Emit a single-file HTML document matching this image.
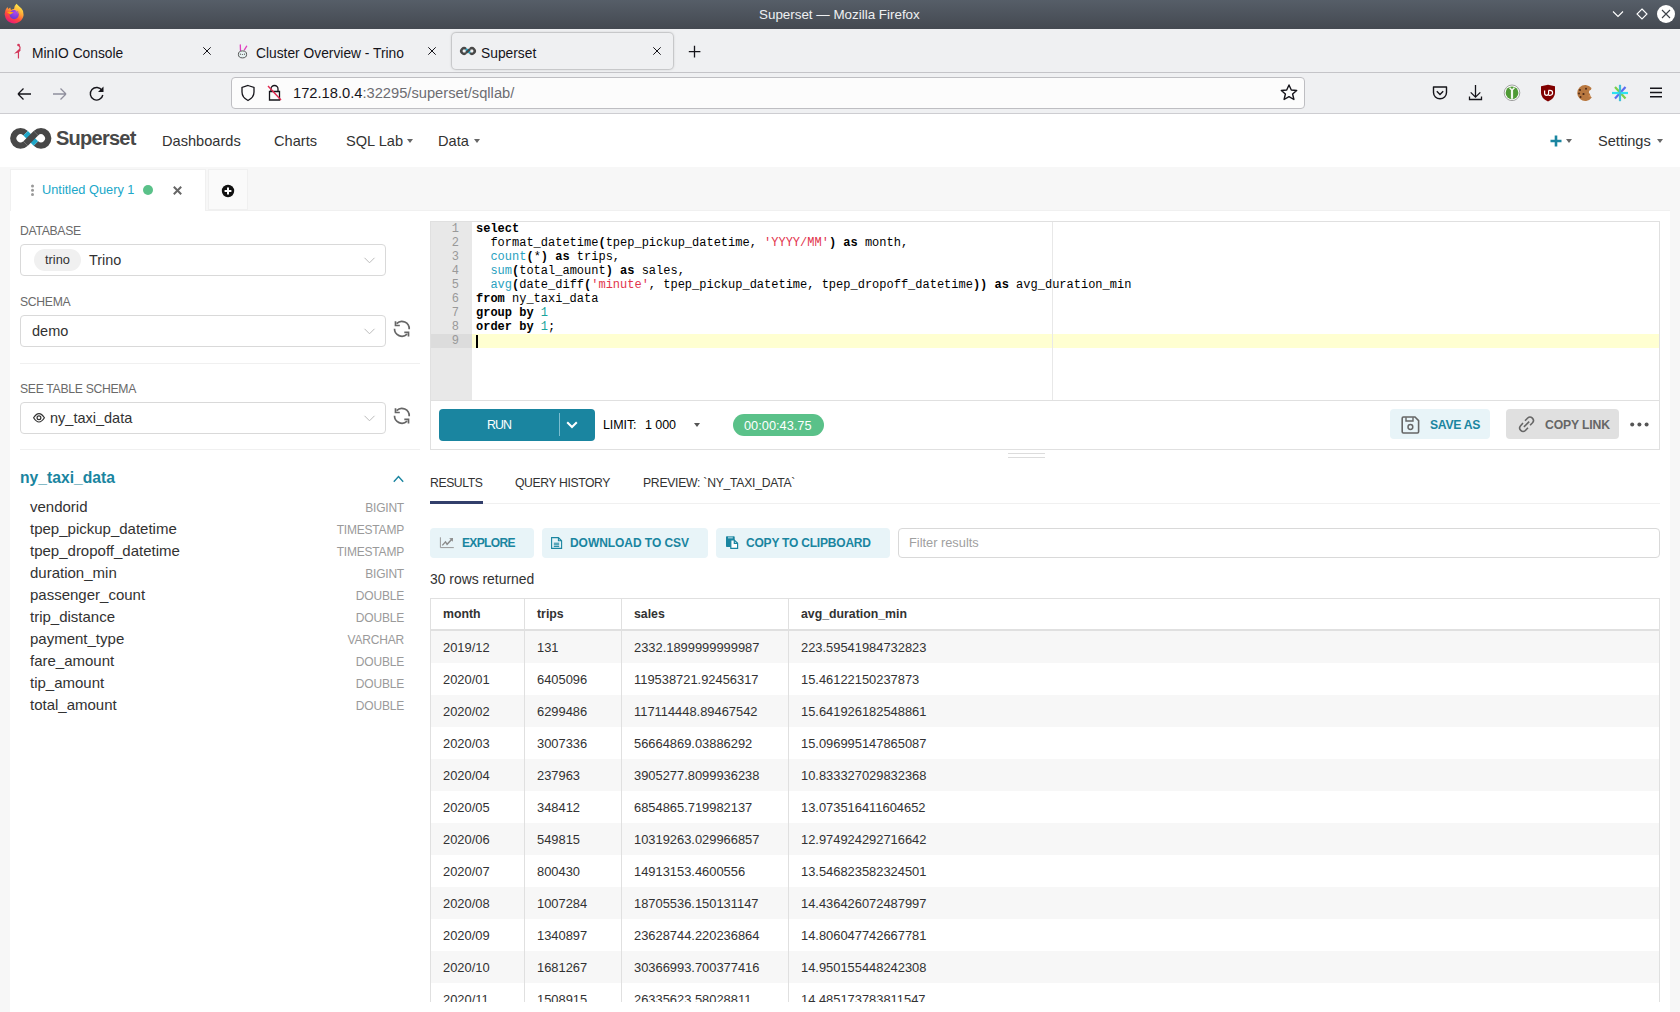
<!DOCTYPE html><html><head><meta charset="utf-8"><style>
*{box-sizing:border-box;margin:0;padding:0}
html,body{width:1680px;height:1012px;overflow:hidden;background:#f7f7f7;font-family:"Liberation Sans",sans-serif;position:relative}
.a{position:absolute}
.t{position:absolute;white-space:nowrap;line-height:1}
svg{position:absolute;overflow:visible}
.ff{font-size:13.8px;color:#15141a}
.nav{font-size:14.6px;color:#323232}
.caret{position:absolute;width:0;height:0;border-left:3px solid transparent;border-right:3px solid transparent;border-top:4px solid #666}
.lbl{font-size:12.2px;color:#6a6a6a;letter-spacing:-0.3px}
.sel{position:absolute;left:20px;width:366px;height:32px;border:1px solid #d9d9d9;border-radius:4px;background:#fff}
.col{font-size:15px;color:#323232}
.typ{font-size:12px;color:#9a9a9a;text-align:right;letter-spacing:-0.2px}
.code{font-family:"Liberation Mono",monospace;font-size:12px;line-height:14px;color:#000;white-space:pre}
.gut{font-family:"Liberation Mono",monospace;font-size:12px;line-height:14px;color:#999;text-align:right;width:29px;white-space:pre}
.kw{font-weight:bold}
.fn{color:#2aa1c0}
.st{color:#e2344c}
.nm{color:#1aa39b}
.btn2{position:absolute;height:30px;background:#e8f4f8;border-radius:4px}
.btxt{font-size:11.8px;font-weight:bold;color:#1a85a0}
.cell{font-size:12.9px;color:#323232}
.hcell{font-size:12.3px;font-weight:bold;color:#323232}
</style></head><body>
<div class="a" style="left:0;top:0;width:1680px;height:29px;background:linear-gradient(#565e68,#444951)"></div>
<svg style="left:0;top:0" width="30" height="28" viewBox="0 0 30 28">
<defs>
<linearGradient id="fxr" x1="0.8" y1="0.1" x2="0.3" y2="1"><stop offset="0" stop-color="#ffe94a"/><stop offset="0.35" stop-color="#ffa436"/><stop offset="0.65" stop-color="#ff4a3d"/><stop offset="1" stop-color="#e8157d"/></linearGradient>
<radialGradient id="fxp" cx="0.6" cy="0.3" r="0.8"><stop offset="0" stop-color="#b043f0"/><stop offset="1" stop-color="#5a3ad0"/></radialGradient>
</defs>
<path d="M16.5 3.8 Q19 6.5 21.5 8.5 Q24 11 23.6 15 A9.5 9.5 0 1 1 5.5 10 Q6.5 8 7.5 7 L8.2 9 L10.2 7.6 L11 10 Q13 8.8 14 9 Q14 6 16.5 3.8 Z" fill="url(#fxr)"/>
<circle cx="14.2" cy="14.6" r="4.6" fill="url(#fxp)"/>
<path d="M7 12.5 Q10 11 13.8 12.6 Q11.5 13.8 10.5 14.5 Q8.5 13 7 12.5 Z" fill="#ffa80e"/>
<path d="M14 9 Q17 8.5 17 11 L15.6 11.6 Q18 12.5 17.5 16 Q18.5 11 15.5 10.5 Z" fill="#ffd23a" opacity="0.6"/>
</svg>
<div class="t" style="left:759px;top:8px;font-size:13.4px;color:#eef0f2">Superset — Mozilla Firefox</div>
<svg style="left:1610px;top:6px" width="70" height="20" viewBox="0 0 70 20">
<polyline points="3,5.5 8,10.5 13,5.5" fill="none" stroke="#fff" stroke-width="1.1"/>
<polygon points="32,3 37,8 32,13 27,8" fill="none" stroke="#fff" stroke-width="1.1"/>
<circle cx="56" cy="8" r="9" fill="#fff"/>
<path d="M52 4 L60 12 M60 4 L52 12" stroke="#3d4249" stroke-width="1.1"/>
</svg>
<div class="a" style="left:0;top:29px;width:1680px;height:43px;background:#eff0f2"></div>
<div class="a" style="left:0;top:72px;width:1680px;height:1px;background:#c4c4c8"></div>
<div class="a" style="left:0;top:73px;width:1680px;height:40px;background:#eff0f2"></div>
<div class="a" style="left:0;top:113px;width:1680px;height:1px;background:#cdcdd1"></div>
<div class="a" style="left:452px;top:33px;width:221px;height:36px;background:#eff0f2;border-radius:4px;box-shadow:0 0 0 1px rgba(0,0,0,.07),0 0 3px rgba(0,0,0,.28)"></div>
<svg style="left:8px;top:40px" width="20" height="22" viewBox="0 0 20 22">
<circle cx="10.5" cy="5" r="1.3" fill="#d3385a"/>
<path d="M10.8 5.3 Q12.8 7.2 11.9 9.6" fill="none" stroke="#d3385a" stroke-width="1.2"/>
<path d="M6 13.8 L11.6 8.6 L12.6 10.4 L10.6 12.6 Z" fill="#d3385a"/>
<path d="M10.45 11.4 V17.9" stroke="#d3385a" stroke-width="1.2" stroke-linecap="round"/>
</svg>
<svg style="left:236px;top:42px" width="14" height="17" viewBox="0 0 14 17">
<path d="M4.3 3 L4.5 8.6 M10.7 4.2 L8.4 7.8" stroke="#e040c0" stroke-width="1.3" stroke-linecap="round"/>
<ellipse cx="6.5" cy="12.4" rx="4.1" ry="3.5" fill="#e6f2f2" stroke="#555" stroke-width="1"/>
<circle cx="4.4" cy="12.2" r="0.6" fill="#555"/><circle cx="6.4" cy="12.5" r="0.6" fill="#555"/><circle cx="8.5" cy="12.2" r="0.6" fill="#555"/>
</svg>
<svg style="left:460px;top:47px" width="16" height="8" viewBox="0 0.9 41.5 20.8" preserveAspectRatio="none">
<path d="M15.6 6.2 A7.2 7.2 0 1 0 15.6 16.4 M25.9 6.2 A7.2 7.2 0 1 1 25.9 16.4" fill="none" stroke="#484848" stroke-width="6.4"/>
<path d="M15.6 6.2 L25.9 16.4" stroke="#20a7c9" stroke-width="6.4"/>
<path d="M15.6 16.4 L25.9 6.2" stroke="#484848" stroke-width="6.4"/>
</svg>
<div class="t ff" style="left:32px;top:47px">MinIO Console</div>
<div class="t ff" style="left:256px;top:47px">Cluster Overview - Trino</div>
<div class="t ff" style="left:481px;top:47px">Superset</div>
<svg style="left:203px;top:47px" width="8" height="8" viewBox="0 0 8 8"><path d="M0.3 0.3 L7.7 7.7 M7.7 0.3 L0.3 7.7" stroke="#15141a" stroke-width="1"/></svg>
<svg style="left:428px;top:47px" width="8" height="8" viewBox="0 0 8 8"><path d="M0.3 0.3 L7.7 7.7 M7.7 0.3 L0.3 7.7" stroke="#15141a" stroke-width="1"/></svg>
<svg style="left:653px;top:47px" width="8" height="8" viewBox="0 0 8 8"><path d="M0.3 0.3 L7.7 7.7 M7.7 0.3 L0.3 7.7" stroke="#15141a" stroke-width="1"/></svg>
<svg style="left:688px;top:45px" width="13" height="13" viewBox="0 0 13 13"><path d="M6.5 0.8 V12.6 M0.8 6.7 H12.4" stroke="#15141a" stroke-width="1.3"/></svg>
<svg style="left:16px;top:86px" width="90" height="16" viewBox="0 0 90 16">
<path d="M2 8 H15 M2 8 L7.5 2.5 M2 8 L7.5 13.5" fill="none" stroke="#15141a" stroke-width="1.3"/>
<path d="M37 8 H50 M50 8 L44.5 2.5 M50 8 L44.5 13.5" fill="none" stroke="#8f8f9d" stroke-width="1.3"/>
<path d="M86 4.5 A6.3 6.3 0 1 0 86.8 9" fill="none" stroke="#15141a" stroke-width="1.4"/>
<path d="M87.5 0.5 L87.5 6 L82 6 Z" fill="#15141a"/>
</svg>
<div class="a" style="left:231px;top:77px;width:1074px;height:32px;background:#fcfcfc;border:1px solid #bebec2;border-radius:4px"></div>
<svg style="left:240px;top:84px" width="40" height="18" viewBox="0 0 40 18">
<path d="M8 1.5 L14 3.5 V8 Q14 13.5 8 16.5 Q2 13.5 2 8 V3.5 Z" fill="none" stroke="#15141a" stroke-width="1.3"/>
<path d="M31 7 V5 A3.5 3.5 0 0 1 38 5 V7 M29.5 7.5 H39.5 V16 H29.5 Z" fill="none" stroke="#15141a" stroke-width="1.3"/>
<path d="M28 2 L41 16" stroke="#e22850" stroke-width="1.4"/>
</svg>
<div class="t" style="left:293px;top:86px;font-size:14.7px;color:#15141a">172.18.0.4<span style="color:#6d6d72">:32295/superset/sqllab/</span></div>
<svg style="left:1280px;top:84px" width="18" height="17" viewBox="0 0 18 17">
<path d="M9 1 L11.3 6 L16.7 6.5 L12.6 10 L13.9 15.5 L9 12.6 L4.1 15.5 L5.4 10 L1.3 6.5 L6.7 6 Z" fill="none" stroke="#15141a" stroke-width="1.4" stroke-linejoin="round"/>
</svg>
<svg style="left:1430px;top:84px" width="240" height="20" viewBox="0 0 240 20">
<path d="M3.5 3 H16.5 V8.5 A6.5 6.2 0 0 1 3.5 8.5 Z" fill="none" stroke="#15141a" stroke-width="1.4" stroke-linejoin="round"/>
<path d="M6.8 7.3 L10 10.5 L13.2 7.3" fill="none" stroke="#15141a" stroke-width="1.4"/>
<path d="M45.5 1 V13 M40.7 8.4 L45.5 13.2 L50.3 8.4 M39.5 12.5 V15.5 H51.5 V12.5" fill="none" stroke="#15141a" stroke-width="1.3"/>
<circle cx="82" cy="8.8" r="7.8" fill="#fff" stroke="#8a8a8a" stroke-width="0.8"/>
<circle cx="82" cy="8.8" r="6.4" fill="#4f9a35"/>
<path d="M82 5 V14.8" stroke="#f2f8ee" stroke-width="2.2"/>
<path d="M79.6 3.6 Q82 7.5 84.4 3.6" fill="none" stroke="#f2f8ee" stroke-width="1.6"/>
<path d="M111 2.2 L118 0.8 L125 2.2 V9 Q125 14.2 118 17.4 Q111 14.2 111 9 Z" fill="#800000"/>
<path d="M114.6 6.4 V9.3 Q114.6 11.3 116.6 11.3 Q118.6 11.3 118.6 9.3 V6.4" fill="none" stroke="#fff" stroke-width="1.2"/>
<path d="M118.4 6.4 H120 Q122.6 6.4 122.6 8.85 Q122.6 11.3 120 11.3 H118.4" fill="none" stroke="#fff" stroke-width="1.2"/>
<path d="M161.5 4 A8 8 0 1 0 161.8 13.5 Q159.5 12.5 160 10 Q158 8.5 159.5 6.5 Q161.5 6 161.5 4 Z" fill="#b87840"/>
<circle cx="150" cy="6" r="1" fill="#4a2818"/><circle cx="153.5" cy="10" r="1.1" fill="#4a2818"/><circle cx="150.5" cy="13" r="1" fill="#4a2818"/><circle cx="156" cy="4.8" r="1" fill="#4a2818"/><circle cx="149" cy="9.5" r="0.9" fill="#4a2818"/>
<circle cx="159.5" cy="12" r="1" fill="#d08850"/>
<path d="M185 3 L195.5 14.5" stroke="#7ad04a" stroke-width="2.2"/>
<path d="M195.5 3 L185 14.5" stroke="#5b6cf0" stroke-width="2.2"/>
<path d="M182 9 H198" stroke="#2ee0f0" stroke-width="2.2"/>
<path d="M190 0.8 V17.2" stroke="#40c0d8" stroke-width="2.2"/>
<path d="M220 4.2 H232 M220 8.5 H232 M220 12.8 H232" stroke="#15141a" stroke-width="1.4"/>
</svg>
<div class="a" style="left:0;top:114px;width:1680px;height:53px;background:#fff"></div>
<svg style="left:10px;top:127px" width="42" height="23" viewBox="0 0 42 23">
<path d="M15.6 6.2 A7.2 7.2 0 1 0 15.6 16.4 M25.9 6.2 A7.2 7.2 0 1 1 25.9 16.4" fill="none" stroke="#484848" stroke-width="6.4"/>
<path d="M15.6 6.2 L25.9 16.4" stroke="#20a7c9" stroke-width="6.4"/>
<path d="M15.6 16.4 L25.9 6.2" stroke="#484848" stroke-width="6.4"/>
</svg>
<div class="t" style="left:56px;top:128px;font-size:20px;font-weight:bold;color:#484848;letter-spacing:-0.75px">Superset</div>
<div class="t nav" style="left:162px;top:134px">Dashboards</div>
<div class="t nav" style="left:274px;top:134px">Charts</div>
<div class="t nav" style="left:346px;top:134px">SQL Lab</div>
<div class="caret" style="left:407px;top:139px"></div>
<div class="t nav" style="left:438px;top:134px">Data</div>
<div class="caret" style="left:474px;top:139px"></div>
<svg style="left:1550px;top:135px" width="12" height="12" viewBox="0 0 12 12"><path d="M6 0.5 V11.5 M0.5 6 H11.5" stroke="#1a85a0" stroke-width="2.6"/></svg>
<div class="caret" style="left:1566px;top:139px"></div>
<div class="t nav" style="left:1598px;top:134px">Settings</div>
<div class="caret" style="left:1657px;top:139px"></div>
<div class="a" style="left:0;top:167px;width:1680px;height:43px;background:#f7f7f7"></div>
<div class="a" style="left:10px;top:169px;width:196px;height:42px;background:#fff;border:1px solid #f0f0f0;border-bottom:none"></div>
<div class="a" style="left:208px;top:169px;width:40px;height:41px;background:#fafafa;border:1px solid #f0f0f0"></div>
<svg style="left:30px;top:184px" width="6" height="13" viewBox="0 0 6 13"><circle cx="2.5" cy="2" r="1.5" fill="#999"/><circle cx="2.5" cy="6.3" r="1.5" fill="#999"/><circle cx="2.5" cy="10.6" r="1.5" fill="#999"/></svg>
<div class="t" style="left:42px;top:184px;font-size:12.8px;color:#20a7c9">Untitled Query 1</div>
<div class="a" style="left:143px;top:185px;width:10px;height:10px;border-radius:50%;background:#5ac189"></div>
<svg style="left:173px;top:186px" width="9" height="9" viewBox="0 0 9 9"><path d="M0.8 0.8 L8.2 8.2 M8.2 0.8 L0.8 8.2" stroke="#666" stroke-width="2"/></svg>
<svg style="left:221px;top:184px" width="14" height="14" viewBox="0 0 14 14"><circle cx="7" cy="7" r="6.2" fill="#111"/><path d="M7 3.6 V10.4 M3.6 7 H10.4" stroke="#fff" stroke-width="2"/></svg>
<div class="a" style="left:10px;top:210px;width:1660px;height:802px;background:#fff;border-top:1px solid #f0f0f0"></div>
<div class="a" style="left:11px;top:210px;width:194px;height:1px;background:#fff"></div>
<div class="t lbl" style="left:20px;top:225px">DATABASE</div>
<div class="sel" style="top:244px"></div>
<div class="a" style="left:34px;top:249px;width:47px;height:22px;border-radius:11px;background:#f0f0f0"></div>
<div class="t" style="left:45px;top:254px;font-size:12.8px;color:#323232">trino</div>
<div class="t" style="left:89px;top:253px;font-size:14.4px;color:#323232">Trino</div>
<div class="t lbl" style="left:20px;top:296px">SCHEMA</div>
<div class="sel" style="top:315px"></div>
<div class="t" style="left:32px;top:324px;font-size:14.5px;color:#323232">demo</div>
<div class="a" style="left:20px;top:363px;width:400px;height:1px;background:#f0f0f0"></div>
<div class="t lbl" style="left:20px;top:383px">SEE TABLE SCHEMA</div>
<div class="sel" style="top:402px"></div>
<svg style="left:28px;top:406px" width="30" height="24" viewBox="0 0 30 24"><path d="M5.6 11.8 Q11 3.4 16.4 11.8 Q11 20.2 5.6 11.8 Z" fill="none" stroke="#323232" stroke-width="1.2"/><circle cx="10.95" cy="11.8" r="1.9" fill="none" stroke="#323232" stroke-width="1.2"/></svg>
<div class="t" style="left:50px;top:411px;font-size:14.5px;color:#323232">ny_taxi_data</div>
<div class="a" style="left:20px;top:449px;width:400px;height:1px;background:#f0f0f0"></div>
<svg style="left:364px;top:257px" width="11" height="7" viewBox="0 0 11 7"><polyline points="0.5,0.8 5.5,5.8 10.5,0.8" fill="none" stroke="#bbb" stroke-width="1"/></svg>
<svg style="left:364px;top:328px" width="11" height="7" viewBox="0 0 11 7"><polyline points="0.5,0.8 5.5,5.8 10.5,0.8" fill="none" stroke="#bbb" stroke-width="1"/></svg>
<svg style="left:364px;top:415px" width="11" height="7" viewBox="0 0 11 7"><polyline points="0.5,0.8 5.5,5.8 10.5,0.8" fill="none" stroke="#bbb" stroke-width="1"/></svg>
<svg style="left:394px;top:321px" width="16" height="16" viewBox="0 0 16 16">
<path d="M2.6 2.6 A7.4 7.4 0 0 1 15.2 8.2 M0.5 7.8 A7.4 7.4 0 0 0 13.1 13.1" fill="none" stroke="#666" stroke-width="1.7"/>
<path d="M1.5 0.3 V4.5 H5.8 M10.3 11.4 H14.5 V15.6" fill="none" stroke="#666" stroke-width="1.7"/>
</svg>
<svg style="left:394px;top:408px" width="16" height="16" viewBox="0 0 16 16">
<path d="M2.6 2.6 A7.4 7.4 0 0 1 15.2 8.2 M0.5 7.8 A7.4 7.4 0 0 0 13.1 13.1" fill="none" stroke="#666" stroke-width="1.7"/>
<path d="M1.5 0.3 V4.5 H5.8 M10.3 11.4 H14.5 V15.6" fill="none" stroke="#666" stroke-width="1.7"/>
</svg>
<div class="t" style="left:20px;top:470px;font-size:15.7px;font-weight:bold;color:#1a85a0">ny_taxi_data</div>
<svg style="left:393px;top:475px" width="11" height="8" viewBox="0 0 11 8"><polyline points="0.8,6.8 5.5,1.5 10.2,6.8" fill="none" stroke="#1a85a0" stroke-width="1.4"/></svg>
<div class="t col" style="left:30px;top:499px">vendorid</div>
<div class="t typ" style="left:283px;width:121px;top:502px">BIGINT</div>
<div class="t col" style="left:30px;top:521px">tpep_pickup_datetime</div>
<div class="t typ" style="left:283px;width:121px;top:524px">TIMESTAMP</div>
<div class="t col" style="left:30px;top:543px">tpep_dropoff_datetime</div>
<div class="t typ" style="left:283px;width:121px;top:546px">TIMESTAMP</div>
<div class="t col" style="left:30px;top:565px">duration_min</div>
<div class="t typ" style="left:283px;width:121px;top:568px">BIGINT</div>
<div class="t col" style="left:30px;top:587px">passenger_count</div>
<div class="t typ" style="left:283px;width:121px;top:590px">DOUBLE</div>
<div class="t col" style="left:30px;top:609px">trip_distance</div>
<div class="t typ" style="left:283px;width:121px;top:612px">DOUBLE</div>
<div class="t col" style="left:30px;top:631px">payment_type</div>
<div class="t typ" style="left:283px;width:121px;top:634px">VARCHAR</div>
<div class="t col" style="left:30px;top:653px">fare_amount</div>
<div class="t typ" style="left:283px;width:121px;top:656px">DOUBLE</div>
<div class="t col" style="left:30px;top:675px">tip_amount</div>
<div class="t typ" style="left:283px;width:121px;top:678px">DOUBLE</div>
<div class="t col" style="left:30px;top:697px">total_amount</div>
<div class="t typ" style="left:283px;width:121px;top:700px">DOUBLE</div>
<div class="a" style="left:430px;top:221px;width:1230px;height:180px;border:1px solid #e0e0e0;background:#fff"></div>
<div class="a" style="left:431px;top:222px;width:41px;height:178px;background:#e8e8e8"></div>
<div class="a" style="left:472px;top:334px;width:1187px;height:14px;background:#ffffcc;opacity:0.9"></div>
<div class="a" style="left:431px;top:334px;width:41px;height:14px;background:#dcdcdc"></div>
<div class="a" style="left:476px;top:335px;width:2px;height:13px;background:#000"></div>
<div class="a" style="left:1052px;top:222px;width:1px;height:178px;background:#e8e8e8"></div>
<div class="t gut" style="left:430px;top:222px">1
2
3
4
5
6
7
8
9
</div>
<div class="t code" style="left:476px;top:222px"><span class="kw">select</span>
  format_datetime<span class="kw">(</span>tpep_pickup_datetime, <span class="st">'YYYY/MM'</span><span class="kw">)</span> <span class="kw">as</span> month,
  <span class="fn">count</span><span class="kw">(</span>*<span class="kw">)</span> <span class="kw">as</span> trips,
  <span class="fn">sum</span><span class="kw">(</span>total_amount<span class="kw">)</span> <span class="kw">as</span> sales,
  <span class="fn">avg</span><span class="kw">(</span>date_diff<span class="kw">(</span><span class="st">'minute'</span>, tpep_pickup_datetime, tpep_dropoff_datetime<span class="kw">))</span> <span class="kw">as</span> avg_duration_min
<span class="kw">from</span> ny_taxi_data
<span class="kw">group</span> <span class="kw">by</span> <span class="nm">1</span>
<span class="kw">order</span> <span class="kw">by</span> <span class="nm">1</span>;
</div>
<div class="a" style="left:430px;top:401px;width:1230px;height:49px;border:1px solid #e0e0e0;border-top:none;background:#fff"></div>
<div class="a" style="left:439px;top:409px;width:156px;height:32px;border-radius:4px;background:#1a85a0"></div>
<div class="a" style="left:559px;top:413px;width:1px;height:23px;background:#7bbdd0"></div>
<div class="t" style="left:487px;top:419px;font-size:12.40px;letter-spacing:-0.933px;color:#fff">RUN</div>
<svg style="left:566px;top:421px" width="12" height="8" viewBox="0 0 12 8"><polyline points="1.2,1.2 6,6 10.8,1.2" fill="none" stroke="#fff" stroke-width="2"/></svg>
<div class="t" style="left:603px;top:419px;font-size:12.50px;letter-spacing:-0.107px;color:#000">LIMIT:</div>
<div class="t" style="left:645px;top:419px;font-size:12.50px;letter-spacing:-0.070px;color:#000">1 000</div>
<div class="caret" style="left:694px;top:423px;border-top-color:#555"></div>
<div class="a" style="left:733px;top:414px;width:91px;height:22px;border-radius:11px;background:#5ac189"></div>
<div class="t" style="left:744px;top:420px;font-size:12.8px;color:#fff">00:00:43.75</div>
<div class="a" style="left:1390px;top:409px;width:100px;height:30px;border-radius:4px;background:#e8f4f8"></div>
<svg style="left:1401px;top:416px" width="19" height="18" viewBox="0 0 19 18">
<path d="M1.2 2.2 Q1.2 1 2.4 1 H14 L17.6 4.6 V15.8 Q17.6 17 16.4 17 H2.4 Q1.2 17 1.2 15.8 Z" fill="none" stroke="#666" stroke-width="1.6"/>
<path d="M5 1.2 V5 H12 V1.2" fill="none" stroke="#666" stroke-width="1.4"/>
<circle cx="9.4" cy="11" r="2.4" fill="none" stroke="#666" stroke-width="1.5"/>
</svg>
<div class="t btxt" style="left:1430px;top:419px;font-size:12.20px;letter-spacing:-0.284px">SAVE AS</div>
<div class="a" style="left:1506px;top:409px;width:113px;height:30px;border-radius:4px;background:#e0e0e0"></div>
<svg style="left:1512px;top:410px" width="30" height="30" viewBox="0 0 30 30">
<path d="M13 10.7 L15.7 8.0 A3.4 3.4 0 0 1 20.5 12.8 L18.1 15.2 M11 13 L8.6 15.7 A3.4 3.4 0 0 0 13.4 20.5 L16 17.8 M11.9 16.9 L17.2 11.6" fill="none" stroke="#666" stroke-width="1.6"/>
</svg>
<div class="t btxt" style="left:1545px;top:419px;font-size:12.20px;letter-spacing:-0.151px;color:#666">COPY LINK</div>
<svg style="left:1630px;top:422px" width="19" height="5" viewBox="0 0 19 5"><circle cx="2.2" cy="2.5" r="2" fill="#555"/><circle cx="9.4" cy="2.5" r="2" fill="#555"/><circle cx="16.6" cy="2.5" r="2" fill="#555"/></svg>
<div class="a" style="left:1008px;top:453px;width:37px;height:1px;background:#dcdcdc"></div>
<div class="a" style="left:1008px;top:457px;width:37px;height:1px;background:#dcdcdc"></div>
<div class="a" style="left:430px;top:503px;width:1230px;height:1px;background:#f0f0f0"></div>
<div class="t" style="left:430px;top:477px;font-size:12.20px;letter-spacing:-0.395px;color:#323232">RESULTS</div>
<div class="t" style="left:515px;top:477px;font-size:12.20px;letter-spacing:-0.385px;color:#323232">QUERY HISTORY</div>
<div class="t" style="left:643px;top:477px;font-size:12.20px;letter-spacing:-0.269px;color:#323232">PREVIEW: `NY_TAXI_DATA`</div>
<div class="a" style="left:430px;top:501px;width:53px;height:3px;background:#323f6b"></div>
<div class="btn2" style="left:430px;top:528px;width:104px"></div>
<svg style="left:436px;top:532px" width="22" height="20" viewBox="0 0 22 20"><path d="M4.4 5.3 V15.6 H17.8" fill="none" stroke="#999" stroke-width="1"/><path d="M6.3 13.4 L9.5 9.9 L11.1 12.3 L15.8 7.3" fill="none" stroke="#8a8a8a" stroke-width="1.4"/><path d="M13.2 6.2 L17 6 L16.8 9.8 Z" fill="#8a8a8a"/></svg>
<div class="t btxt" style="left:462px;top:537px;font-size:12.00px;letter-spacing:-0.641px">EXPLORE</div>
<div class="btn2" style="left:542px;top:528px;width:166px"></div>
<svg style="left:551px;top:537px" width="12" height="12" viewBox="0 0 12 12"><path d="M0.6 0.6 H7.4 L10.6 3.8 V11.4 H0.6 Z M7.4 0.6 V3.8 H10.6" fill="none" stroke="#1a85a0" stroke-width="1.1"/><path d="M2.8 6.2 H8.2 M2.8 7.8 H8.2 M2.8 9.4 H8.2" stroke="#1a85a0" stroke-width="1"/></svg>
<div class="t btxt" style="left:570px;top:537px;font-size:12.00px;letter-spacing:-0.056px">DOWNLOAD TO CSV</div>
<div class="btn2" style="left:716px;top:528px;width:174px"></div>
<svg style="left:720px;top:530px" width="20" height="26" viewBox="0 0 20 26"><rect x="6" y="6.2" width="8.7" height="10.8" rx="0.8" fill="#1a85a0"/><rect x="8" y="6.6" width="4.8" height="1.9" fill="#8cc3d3"/><path d="M10.8 10 H14.3 L17.6 13.3 V18.4 H10.8 Z" fill="#fff" stroke="#1a85a0" stroke-width="1.2"/><path d="M14.3 10 V13.3 H17.6" fill="none" stroke="#1a85a0" stroke-width="1.2"/></svg>
<div class="t btxt" style="left:746px;top:537px;font-size:12.00px;letter-spacing:-0.203px">COPY TO CLIPBOARD</div>
<div class="a" style="left:898px;top:528px;width:762px;height:30px;border:1px solid #d9d9d9;border-radius:4px;background:#fff"></div>
<div class="t" style="left:909px;top:537px;font-size:12.8px;color:#a0a0a0">Filter results</div>
<div class="t" style="left:430px;top:573px;font-size:13.9px;color:#323232">30 rows returned</div>
<div class="a" style="left:430px;top:598px;width:1230px;height:404px;overflow:hidden;border-left:1px solid #e0e0e0;border-right:1px solid #e0e0e0;border-top:1px solid #e0e0e0">
<div class="a" style="left:0;top:30px;width:1230px;height:2px;background:#e0e0e0"></div>
<div class="a" style="left:0;top:32px;width:1230px;height:32px;background:#f7f7f7"></div>
<div class="a" style="left:0;top:96px;width:1230px;height:32px;background:#f7f7f7"></div>
<div class="a" style="left:0;top:160px;width:1230px;height:32px;background:#f7f7f7"></div>
<div class="a" style="left:0;top:224px;width:1230px;height:32px;background:#f7f7f7"></div>
<div class="a" style="left:0;top:288px;width:1230px;height:32px;background:#f7f7f7"></div>
<div class="a" style="left:0;top:352px;width:1230px;height:32px;background:#f7f7f7"></div>
<div class="a" style="left:93px;top:0;width:1px;height:404px;background:#e0e0e0"></div>
<div class="a" style="left:190px;top:0;width:1px;height:404px;background:#e0e0e0"></div>
<div class="a" style="left:357px;top:0;width:1px;height:404px;background:#e0e0e0"></div>
<div class="t hcell" style="left:12px;top:9px">month</div>
<div class="t hcell" style="left:106px;top:9px">trips</div>
<div class="t hcell" style="left:203px;top:9px">sales</div>
<div class="t hcell" style="left:370px;top:9px">avg_duration_min</div>
<div class="t cell" style="left:12px;top:43px">2019/12</div>
<div class="t cell" style="left:106px;top:43px">131</div>
<div class="t cell" style="left:203px;top:43px">2332.1899999999987</div>
<div class="t cell" style="left:370px;top:43px">223.59541984732823</div>
<div class="t cell" style="left:12px;top:75px">2020/01</div>
<div class="t cell" style="left:106px;top:75px">6405096</div>
<div class="t cell" style="left:203px;top:75px">119538721.92456317</div>
<div class="t cell" style="left:370px;top:75px">15.46122150237873</div>
<div class="t cell" style="left:12px;top:107px">2020/02</div>
<div class="t cell" style="left:106px;top:107px">6299486</div>
<div class="t cell" style="left:203px;top:107px">117114448.89467542</div>
<div class="t cell" style="left:370px;top:107px">15.641926182548861</div>
<div class="t cell" style="left:12px;top:139px">2020/03</div>
<div class="t cell" style="left:106px;top:139px">3007336</div>
<div class="t cell" style="left:203px;top:139px">56664869.03886292</div>
<div class="t cell" style="left:370px;top:139px">15.096995147865087</div>
<div class="t cell" style="left:12px;top:171px">2020/04</div>
<div class="t cell" style="left:106px;top:171px">237963</div>
<div class="t cell" style="left:203px;top:171px">3905277.8099936238</div>
<div class="t cell" style="left:370px;top:171px">10.833327029832368</div>
<div class="t cell" style="left:12px;top:203px">2020/05</div>
<div class="t cell" style="left:106px;top:203px">348412</div>
<div class="t cell" style="left:203px;top:203px">6854865.719982137</div>
<div class="t cell" style="left:370px;top:203px">13.073516411604652</div>
<div class="t cell" style="left:12px;top:235px">2020/06</div>
<div class="t cell" style="left:106px;top:235px">549815</div>
<div class="t cell" style="left:203px;top:235px">10319263.029966857</div>
<div class="t cell" style="left:370px;top:235px">12.974924292716642</div>
<div class="t cell" style="left:12px;top:267px">2020/07</div>
<div class="t cell" style="left:106px;top:267px">800430</div>
<div class="t cell" style="left:203px;top:267px">14913153.4600556</div>
<div class="t cell" style="left:370px;top:267px">13.546823582324501</div>
<div class="t cell" style="left:12px;top:299px">2020/08</div>
<div class="t cell" style="left:106px;top:299px">1007284</div>
<div class="t cell" style="left:203px;top:299px">18705536.150131147</div>
<div class="t cell" style="left:370px;top:299px">14.436426072487997</div>
<div class="t cell" style="left:12px;top:331px">2020/09</div>
<div class="t cell" style="left:106px;top:331px">1340897</div>
<div class="t cell" style="left:203px;top:331px">23628744.220236864</div>
<div class="t cell" style="left:370px;top:331px">14.806047742667781</div>
<div class="t cell" style="left:12px;top:363px">2020/10</div>
<div class="t cell" style="left:106px;top:363px">1681267</div>
<div class="t cell" style="left:203px;top:363px">30366993.700377416</div>
<div class="t cell" style="left:370px;top:363px">14.950155448242308</div>
<div class="t cell" style="left:12px;top:395px">2020/11</div>
<div class="t cell" style="left:106px;top:395px">1508915</div>
<div class="t cell" style="left:203px;top:395px">26335623.58028811</div>
<div class="t cell" style="left:370px;top:395px">14.485173783811547</div>
</div>
</body></html>
